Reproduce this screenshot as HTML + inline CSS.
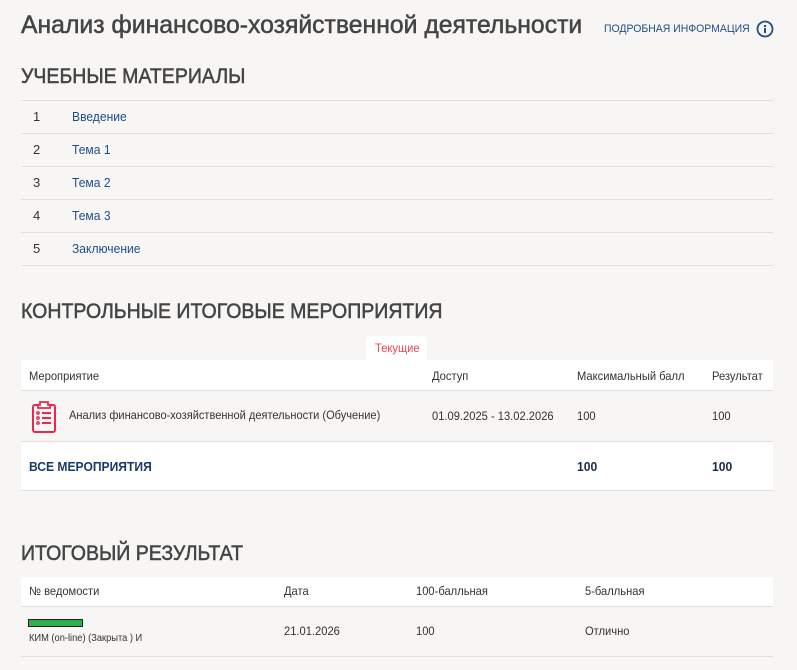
<!DOCTYPE html>
<html><head><meta charset="utf-8"><style>
*{margin:0;padding:0;box-sizing:border-box}
body{width:797px;height:670px;background:#f7f6f4;font-family:"Liberation Sans Narrow","Liberation Sans",sans-serif;color:#333;position:relative;overflow:hidden}
.a{position:absolute;white-space:nowrap;transform-origin:0 0}
h1{position:absolute;left:21px;top:11px;font-size:25px;font-weight:normal;color:#444;-webkit-text-stroke:0.5px #444;transform:scaleX(0.99);transform-origin:0 0;white-space:nowrap}
h2{position:absolute;left:21px;font-size:21px;font-weight:normal;color:#444;-webkit-text-stroke:0.5px #444;transform:scaleX(0.93);transform-origin:0 0;white-space:nowrap}
.line{position:absolute;left:21px;width:752px;height:1px;background:#e0dedb}
.lk{color:#1f4e8a}
.s13{font-size:13px}
.c{transform:scaleX(0.93)}
.w{position:absolute;left:21px;width:752px;background:#fff}
</style></head><body>
<h1>Анализ финансово-хозяйственной деятельности</h1>
<div class="a" style="left:604px;top:23px;font-size:11px;color:#1f4e8a;transform:scaleX(0.95)">ПОДРОБНАЯ ИНФОРМАЦИЯ</div>
<svg class="a" style="left:756px;top:20px" width="18" height="18" viewBox="0 0 18 18"><circle cx="9" cy="9" r="7.5" fill="none" stroke="#1f4e8a" stroke-width="1.8"/><rect x="8" y="8" width="2" height="5" fill="#1f4e8a"/><rect x="8" y="5" width="2" height="2" fill="#1f4e8a"/></svg>
<h2 style="top:65px">УЧЕБНЫЕ МАТЕРИАЛЫ</h2>
<div class="line" style="top:100px"></div><div class="line" style="top:133px"></div><div class="line" style="top:166px"></div><div class="line" style="top:199px"></div><div class="line" style="top:232px"></div><div class="line" style="top:265px"></div>
<div class="a s13" style="left:33px;top:109px">1</div><div class="a s13 lk c" style="left:72px;top:109px">Введение</div>
<div class="a s13" style="left:33px;top:142px">2</div><div class="a s13 lk c" style="left:72px;top:142px">Тема 1</div>
<div class="a s13" style="left:33px;top:175px">3</div><div class="a s13 lk c" style="left:72px;top:175px">Тема 2</div>
<div class="a s13" style="left:33px;top:208px">4</div><div class="a s13 lk c" style="left:72px;top:208px">Тема 3</div>
<div class="a s13" style="left:33px;top:241px">5</div><div class="a s13 lk c" style="left:72px;top:241px">Заключение</div>
<h2 style="top:300px">КОНТРОЛЬНЫЕ ИТОГОВЫЕ МЕРОПРИЯТИЯ</h2>
<div class="a" style="left:366px;top:336px;width:61px;height:25px;background:#fff;border-radius:4px 4px 0 0"></div>
<div class="a c" style="left:375px;top:341px;font-size:12px;color:#e8455a">Текущие</div>
<div class="w" style="top:360px;height:30px"></div>
<div class="line" style="top:390px"></div>
<div class="a c" style="left:29px;top:369px;font-size:12px">Мероприятие</div>
<div class="a c" style="left:432px;top:369px;font-size:12px">Доступ</div>
<div class="a c" style="left:577px;top:369px;font-size:12px">Максимальный балл</div>
<div class="a c" style="left:712px;top:369px;font-size:12px">Результат</div>
<svg class="a" style="left:31px;top:400px" width="28" height="34" viewBox="0 0 28 34"><rect x="2" y="5" width="22" height="27" rx="2" fill="none" stroke="#e8294d" stroke-width="2"/><path d="M9 5V2h8v3h2v3H7V5z" fill="#fff" stroke="#e8294d" stroke-width="1.8"/><g fill="none" stroke="#e8294d" stroke-width="1.4"><circle cx="7" cy="13" r="1.2"/><circle cx="7" cy="18" r="1.2"/><circle cx="7" cy="23" r="1.2"/></g><g stroke="#e8294d" stroke-width="2"><path d="M11 13h9M11 18h9M11 23h9"/></g></svg>
<div class="a" style="left:69px;top:408px;font-size:12px;transform:scaleX(0.92)">Анализ финансово-хозяйственной деятельности (Обучение)</div>
<div class="a c" style="left:432px;top:409px;font-size:12px">01.09.2025 - 13.02.2026</div>
<div class="a c" style="left:577px;top:409px;font-size:12px">100</div>
<div class="a c" style="left:712px;top:409px;font-size:12px">100</div>
<div class="line" style="top:441px"></div>
<div class="w" style="top:442px;height:48px"></div>
<div class="line" style="top:490px"></div>
<div class="a c" style="left:29px;top:459px;font-size:13px;font-weight:bold;color:#1a3a6a">ВСЕ МЕРОПРИЯТИЯ</div>
<div class="a c" style="left:577px;top:459px;font-size:13px;font-weight:bold;color:#1a2a4a">100</div>
<div class="a c" style="left:712px;top:459px;font-size:13px;font-weight:bold;color:#1a2a4a">100</div>
<h2 style="top:542px">ИТОГОВЫЙ РЕЗУЛЬТАТ</h2>
<div class="w" style="top:577px;height:29px"></div>
<div class="line" style="top:606px"></div>
<div class="a c" style="left:29px;top:584px;font-size:12px">№ ведомости</div>
<div class="a c" style="left:284px;top:584px;font-size:12px">Дата</div>
<div class="a c" style="left:416px;top:584px;font-size:12px">100-балльная</div>
<div class="a c" style="left:585px;top:584px;font-size:12px">5-балльная</div>
<div class="a" style="left:28px;top:619px;width:55px;height:8px;background:#2eb04a;border:1px solid #222"></div>
<div class="a c" style="left:29px;top:633px;font-size:10px">КИМ (on-line) (Закрыта ) И</div>
<div class="a c" style="left:284px;top:624px;font-size:12px">21.01.2026</div>
<div class="a c" style="left:416px;top:624px;font-size:12px">100</div>
<div class="a c" style="left:585px;top:624px;font-size:12px">Отлично</div>
<div class="line" style="top:656px"></div>
</body></html>
